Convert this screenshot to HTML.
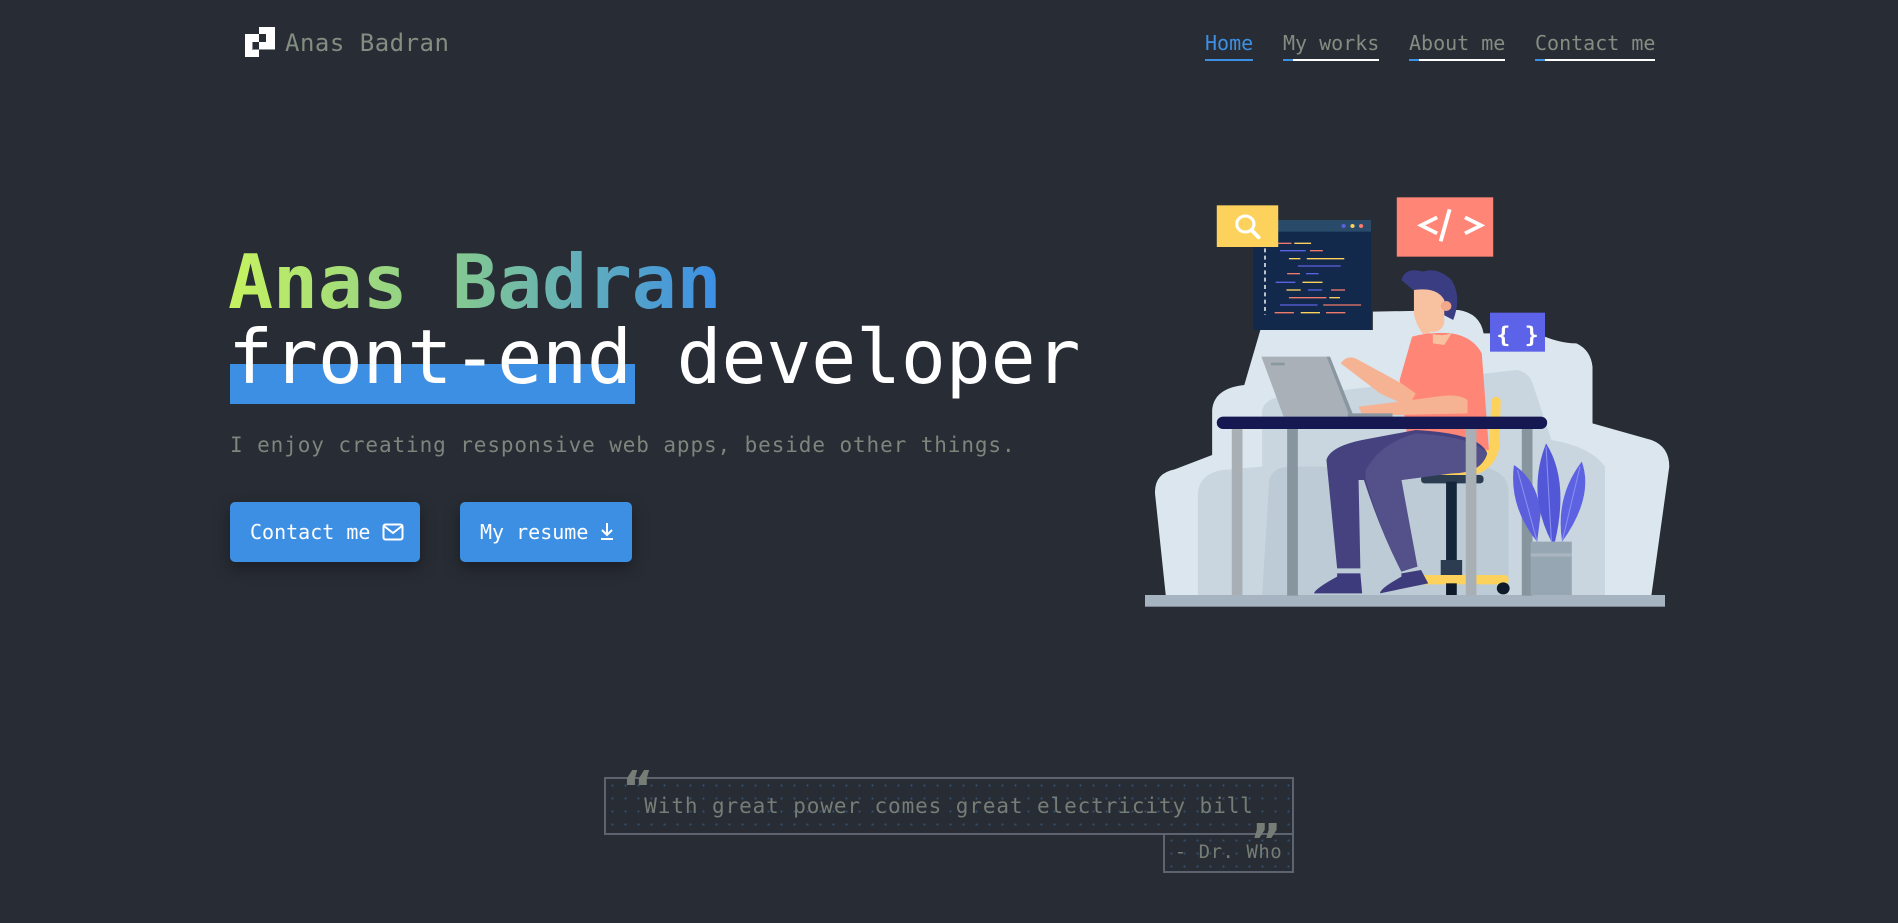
<!DOCTYPE html>
<html><head><meta charset="utf-8">
<style>
*{margin:0;padding:0;box-sizing:border-box}
html,body{width:1898px;height:923px;background:#282c34;overflow:hidden;font-family:"DejaVu Sans Mono","Liberation Mono",monospace}
.abs{position:absolute;white-space:nowrap}
.logo{left:245px;top:27px;width:30px;height:30px}
.brand{left:285px;top:29px;font-size:24px;color:#848d82;letter-spacing:0.5px}
.nav a{position:absolute;top:31px;font-size:20px;color:#848d82;text-decoration:none;line-height:24px;white-space:nowrap}
.nav a::after{content:"";position:absolute;left:0;right:0;top:28px;height:2px;background:linear-gradient(90deg,#3d8fe3 0 10px,#fff 10px)}
.nav a.h{color:#3d8fe3}
.nav a.h::after{background:#3d8fe3}
h1{position:absolute;left:228px;top:242px;font-size:75px;line-height:80px;font-weight:bold;letter-spacing:-0.3px;background:linear-gradient(90deg,#c6f35f,#7fc596 50%,#3b8fe8);-webkit-background-clip:text;background-clip:text;color:transparent;white-space:nowrap}
.bar{left:230px;top:364px;width:405px;height:40px;background:#3d8fe3}
.l2{left:228px;top:317px;font-size:75px;line-height:80px;color:#fff;letter-spacing:-0.3px}
.sub{left:230px;top:433px;font-size:21px;color:#7d857c;letter-spacing:0.9px}
.btn{position:absolute;top:502px;height:60px;background:#3d8fe3;color:#fff;border-radius:5px;font-size:20px;line-height:60px;padding-left:20px;box-shadow:0 6px 16px rgba(0,0,0,.35)}
.quote{left:604px;top:777px;width:690px;height:58px;border:2px solid #5d6470;background-image:radial-gradient(circle,#34506f 1px,transparent 1.2px);background-size:13px 13px;color:#767d76;font-size:21px;text-align:center;line-height:54px;letter-spacing:0.9px}
.auth{left:1163px;top:834px;width:131px;height:39px;border:2px solid #5d6470;border-top:none;background-image:radial-gradient(circle,#34506f 1px,transparent 1.2px);background-size:13px 13px;color:#767d76;font-size:19px;line-height:36px;text-align:center;letter-spacing:0.5px}
.qm{font-family:"DejaVu Sans",sans-serif;font-weight:bold;color:#767d76;font-size:48px;line-height:48px}
</style></head><body>
<svg class="abs logo" viewBox="0 0 30 30"><rect x="14" y="0" width="16" height="23" fill="#fff"/><rect x="0" y="7" width="14" height="23" fill="#fff"/><rect x="14" y="7" width="7" height="8" fill="#282c34"/><rect x="7" y="15" width="7" height="8" fill="#282c34"/><rect x="7" y="15" width="1" height="8" fill="#8a8f96"/><rect x="7" y="22" width="7" height="1" fill="#8a8f96"/><rect x="14" y="22" width="16" height="1" fill="#8a8f96"/></svg>
<div class="abs brand">Anas Badran</div>
<div class="nav">
<a class="h" style="left:1205px">Home</a>
<a style="left:1283px">My works</a>
<a style="left:1409px">About me</a>
<a style="left:1535px">Contact me</a>
</div>
<h1>Anas Badran</h1>
<div class="abs bar"></div>
<div class="abs l2">front-end developer</div>
<div class="abs sub">I enjoy creating responsive web apps, beside other things.</div>
<div class="btn" style="left:230px;width:190px">Contact me <svg width="22" height="18" viewBox="0 0 22 18" style="vertical-align:-2px"><rect x="1.5" y="1.5" width="19" height="15" rx="2" fill="none" stroke="#fff" stroke-width="2"/><path d="M2 3 L11 10 L20 3" fill="none" stroke="#fff" stroke-width="2"/></svg></div>
<div class="btn" style="left:460px;width:172px">My resume <svg width="14" height="20" viewBox="0 0 14 20" style="vertical-align:-2px"><path d="M7 2 V14 M2 9 L7 14 L12 9 M1 18 H13" fill="none" stroke="#fff" stroke-width="2"/></svg></div>

<svg class="abs" style="left:1130px;top:180px" width="560" height="440" viewBox="0 0 1568 1320" preserveAspectRatio="none">
<path d="M100 1245 L70 940 Q68 880 125 868 L230 825 L230 690 Q235 625 320 615 L365 450 L680 450 L680 395 L920 390 Q980 400 990 460 L1140 460 Q1200 490 1250 490 Q1290 510 1295 560 L1295 730 L1460 780 Q1510 800 1510 860 L1460 1245 Z" fill="#dbe6ee"/>
<path d="M190 1245 L190 940 Q195 880 260 870 L370 860 L370 690 Q380 650 440 650 L1080 570 Q1120 575 1130 620 L1180 780 Q1290 800 1330 860 L1330 1245 Z" fill="#c9d6df"/>
<path d="M370 1245 L390 900 Q400 860 450 860 L980 860 Q1060 870 1060 940 L1060 1245 Z" fill="#bccbd6"/>
<rect x="42" y="1245" width="1456" height="35" fill="#a6b4c2"/>
<rect x="345" y="120" width="330" height="330" fill="#13294b"/>
<rect x="345" y="120" width="330" height="35" fill="#2a4a6a"/>
<circle cx="598" cy="138" r="6" fill="#5b62e0"/><circle cx="623" cy="138" r="6" fill="#fcd25c"/><circle cx="647" cy="138" r="6" fill="#ff7a6b"/>
<g stroke-width="4">
<path d="M415 190H452" stroke="#f07a6c"/><path d="M460 190H507" stroke="#fcd25c"/>
<path d="M420 212H492" stroke="#5b62e0"/><path d="M504 212H540" stroke="#f07a6c"/>
<path d="M445 236H477" stroke="#fcd25c"/><path d="M495 236H600" stroke="#fcd25c"/>
<path d="M470 258H590" stroke="#5b62e0"/>
<path d="M440 281H476" stroke="#f07a6c"/><path d="M493 281H528" stroke="#5b62e0"/>
<path d="M408 307H463" stroke="#5b62e0"/><path d="M483 307H539" stroke="#fcd25c"/>
<path d="M438 330H478" stroke="#fcd25c"/><path d="M498 330H538" stroke="#5b62e0"/><path d="M563 330H602" stroke="#f07a6c"/>
<path d="M445 353H550" stroke="#f07a6c"/><path d="M558 353H588" stroke="#fcd25c"/>
<path d="M420 375H525" stroke="#5b62e0"/><path d="M541 375H647" stroke="#f07a6c"/>
<path d="M405 398H459" stroke="#f07a6c"/><path d="M478 398H532" stroke="#fcd25c"/><path d="M549 398H603" stroke="#f07a6c"/>
<path d="M378 205V405" stroke="#fff" stroke-dasharray="12 10"/>
</g>
<rect x="243" y="76" width="172" height="125" fill="#fcd25c"/>
<circle cx="323" cy="132" r="24" fill="none" stroke="#fff" stroke-width="9"/><path d="M340 150L360 172" stroke="#fff" stroke-width="11" stroke-linecap="round"/>
<rect x="747" y="52" width="270" height="178" fill="#ff8577"/>
<path d="M860 112L815 136L860 160 M938 112L983 136L938 160 M895 88L870 184" fill="none" stroke="#fff" stroke-width="11"/>
<rect x="1008" y="398" width="154" height="117" fill="#5d63e8"/>
<text x="1085" y="488" text-anchor="middle" font-family="DejaVu Sans Mono" font-size="66" font-weight="bold" fill="#fff">{ }</text>
<path d="M1012 660 Q1025 640 1038 660 L1035 800 Q1020 880 940 890 L820 895 L830 880 Q960 860 1005 800 Z" fill="#fcd25c"/>
<rect x="815" y="885" width="175" height="25" rx="10" fill="#2c3d52"/>
<rect x="885" y="905" width="30" height="240" fill="#14263a"/>
<rect x="870" y="1140" width="60" height="45" fill="#2c3d52"/>
<rect x="760" y="1185" width="300" height="28" rx="12" fill="#fcd25c"/>
<circle cx="1045" cy="1225" r="18" fill="#0e1a2a"/><rect x="885" y="1210" width="30" height="35" fill="#0e1a2a"/>
<path d="M760 300 Q770 260 820 275 Q860 260 900 300 Q930 350 905 420 L870 400 Z" fill="#3b3d83"/>
<path d="M795 330 Q860 320 880 360 L880 430 Q870 460 840 455 L835 490 L870 495 Q860 520 840 490 Q800 440 795 400 Z" fill="#f8c2a0"/>
<circle cx="885" cy="378" r="15" fill="#f2a98b"/>
<path d="M790 470 Q840 455 900 460 Q960 470 985 520 L1005 810 L780 800 L755 600 Z" fill="#ff8577"/>
<path d="M848 462 Q870 470 900 460 L880 495 L848 490 Z" fill="#f8c2a0"/>
<path d="M590 550 Q610 520 640 540 L760 610 L800 640 L780 680 L700 640 Z" fill="#f5b394"/>
<path d="M640 680 Q720 670 860 650 Q920 640 945 660 L945 700 L740 705 L650 705 Z" fill="#f5b394"/>
<path d="M550 840 Q560 800 650 780 L800 750 Q980 760 1000 820 Q990 870 900 880 L760 900 L800 1160 L760 1175 Q700 1050 655 900 L640 900 L645 1165 L580 1165 Z" fill="#45427f"/>
<path d="M660 870 Q700 790 800 760 Q960 770 1000 820 Q985 880 900 880 L760 900 L805 1160 L760 1175 Q700 1050 660 900 Z" fill="#545089"/>
<path d="M580 1180 L645 1180 L650 1240 L515 1240 Q520 1225 580 1190 Z" fill="#3d3b7c"/>
<path d="M760 1180 L815 1170 L835 1210 L700 1240 Q700 1225 760 1190 Z" fill="#3d3b7c"/>
<path d="M368 530 L550 530 L615 710 L430 710 Z" fill="#a9b0b7"/>
<path d="M550 530 L560 530 L625 705 L615 710 Z" fill="#8a97a0"/>
<rect x="395" y="548" width="38" height="8" fill="#8a97a0"/>
<rect x="610" y="700" width="125" height="12" fill="#8a97a0"/>
<rect x="243" y="710" width="925" height="37" rx="18" fill="#151851"/>
<rect x="285" y="747" width="30" height="500" fill="#a9b0b5"/>
<rect x="440" y="747" width="30" height="500" fill="#87959e"/>
<rect x="940" y="747" width="30" height="500" fill="#a9b0b5"/>
<rect x="1097" y="747" width="30" height="500" fill="#87959e"/>
<path d="M1140 1085 Q1060 980 1075 855 Q1140 900 1150 1000 Z" fill="#5b5fdc"/>
<path d="M1180 1085 Q1110 940 1165 790 Q1230 900 1190 1085 Z" fill="#5257d8"/>
<path d="M1210 1085 Q1190 950 1265 845 Q1300 950 1210 1085 Z" fill="#5d62e3"/>
<path d="M1165 800 L1180 1085 M1085 870 L1140 1085 M1260 860 L1210 1085" stroke="#8a8ff0" stroke-width="3" fill="none"/>
<rect x="1122" y="1085" width="115" height="160" fill="#97a6b3"/>
<rect x="1122" y="1120" width="115" height="10" fill="#a9b6c1"/>
</svg>

<div class="abs quote">With great power comes great electricity bill</div>
<div class="abs qm" style="left:622px;top:765px">&#8220;</div>
<div class="abs auth">- Dr. Who</div>
<div class="abs qm" style="left:1250px;top:818px">&#8221;</div>
</body></html>
